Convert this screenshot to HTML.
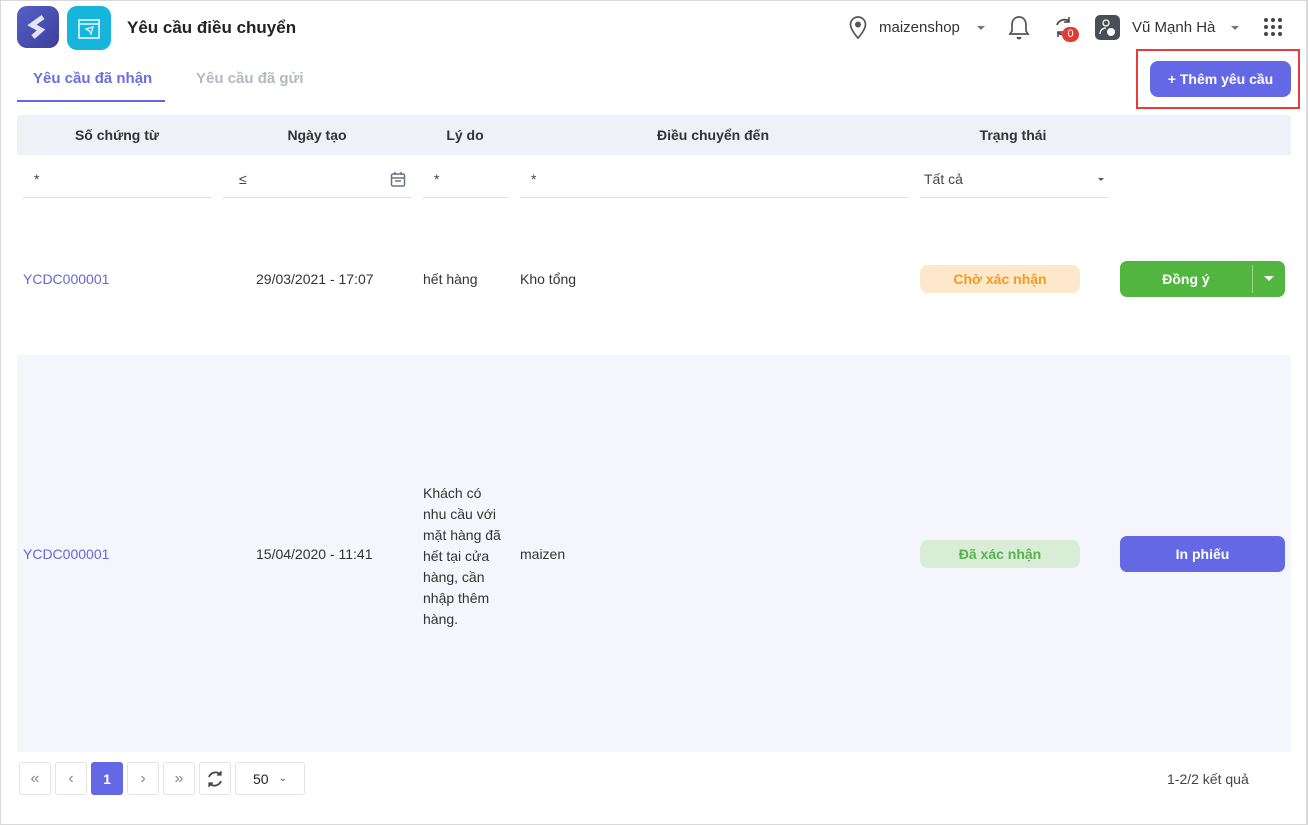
<!DOCTYPE html>
<html><head><meta charset="utf-8"><style>
*{box-sizing:border-box;margin:0;padding:0}
body{width:1308px;height:825px;overflow:hidden;background:#fff;font-family:"Liberation Sans","Noto Sans CJK SC",sans-serif;font-size:14px;color:#333;position:relative}
.frame{position:absolute;inset:0;border:1px solid #d9d9d9;border-right:2px solid #d9d9d9}
.abs{position:absolute}
.hd{font-weight:bold;font-size:14px;color:#333;text-align:center;top:127px}
.inp{position:absolute;top:197px;height:1px;background:#ddd}
.ph{position:absolute;top:171px;font-size:14px;color:#444}
.pg{position:absolute;top:762px;height:33px;border:1px solid #e3e3e3;border-radius:3px;display:flex;align-items:center;justify-content:center;color:#888;font-size:16px;background:#fff}
</style></head><body>
<div class="frame"></div>
<div class="abs" style="left:17px;top:6px;width:42px;height:42px;border-radius:10px;background:linear-gradient(135deg,#5560c8,#3c3f9a)">
<svg width="42" height="42"><path d="M26 11 L15 19 L24 24 L16 31" stroke="#fff" stroke-width="5" fill="none" opacity=".85"/></svg></div>
<div class="abs" style="left:67px;top:6px;width:44px;height:44px;border-radius:10px;background:#16b6dc">
<svg width="44" height="44"><rect x="12" y="14" width="20" height="18" fill="none" stroke="#e6f7fc" stroke-width="1.6"/><path d="M12 18h20" stroke="#e6f7fc" stroke-width="1.6"/><path d="M19 23l7-2-2 7-1.5-3z" fill="none" stroke="#e6f7fc" stroke-width="1.3"/></svg></div>
<div class="abs" style="left:127px;top:18px;font-size:17px;font-weight:bold;color:#222">Yêu cầu điều chuyển</div>
<svg class="abs" style="left:848px;top:15px" width="20" height="26"><path d="M10 2a7.5 7.5 0 0 0-7.5 7.5C2.5 15 10 23 10 23s7.5-8 7.5-13.5A7.5 7.5 0 0 0 10 2z" fill="none" stroke="#555" stroke-width="1.7"/><circle cx="10" cy="9.5" r="3" fill="#555"/></svg>
<div class="abs" style="left:879px;top:19px;font-size:15px;color:#333">maizenshop</div>
<div class="abs" style="left:977px;top:26px;border:4px solid transparent;border-top-color:#777"></div>
<svg class="abs" style="left:1007px;top:14px" width="24" height="28"><path d="M12 3c-5 0-7 4-7 8v6l-2 3h18l-2-3v-6c0-4-2-8-7-8z" fill="none" stroke="#555" stroke-width="1.7"/><path d="M9.5 23a2.5 2.5 0 0 0 5 0" fill="#555"/></svg>
<svg class="abs" style="left:1053px;top:16px" width="22" height="22"><path d="M16 5a8 8 0 0 0-12 4M5 17a8 8 0 0 0 12-4" fill="none" stroke="#444" stroke-width="1.8"/><path d="M16 1v5h-5M5 21v-5h5" fill="none" stroke="#444" stroke-width="1.5"/></svg>
<div class="abs" style="left:1062px;top:27px;width:17px;height:15px;border-radius:8px;background:#e53935;color:#fff;font-size:11px;text-align:center;line-height:15px">0</div>
<div class="abs" style="left:1095px;top:15px;width:25px;height:25px;border-radius:5px;background:#4a4f57">
<svg width="25" height="25"><circle cx="11" cy="8" r="3" fill="none" stroke="#fff" stroke-width="1.3"/><path d="M5 19c0-4 3-6 6-6" fill="none" stroke="#fff" stroke-width="1.3"/><circle cx="16" cy="17" r="4" fill="#fff"/></svg></div>
<div class="abs" style="left:1132px;top:19px;font-size:15px;color:#333">Vũ Mạnh Hà</div>
<div class="abs" style="left:1231px;top:26px;border:4px solid transparent;border-top-color:#777"></div>
<svg class="abs" style="left:1263px;top:17px" width="20" height="20"><g fill="#444"><circle cx="3" cy="3" r="2"/><circle cx="10" cy="3" r="2"/><circle cx="17" cy="3" r="2"/><circle cx="3" cy="10" r="2"/><circle cx="10" cy="10" r="2"/><circle cx="17" cy="10" r="2"/><circle cx="3" cy="17" r="2"/><circle cx="10" cy="17" r="2"/><circle cx="17" cy="17" r="2"/></g></svg>
<div class="abs" style="left:33px;top:70px;font-size:15px;font-weight:bold;color:#6a6fdc">Yêu cầu đã nhận</div>
<div class="abs" style="left:17px;top:100px;width:148px;height:2px;background:#6366e0"></div>
<div class="abs" style="left:196px;top:70px;font-size:15px;font-weight:bold;color:#b3b8c2">Yêu cầu đã gửi</div>
<div class="abs" style="left:1136px;top:49px;width:164px;height:60px;border:2px solid #ea3b3b"></div>
<div class="abs" style="left:1150px;top:61px;width:141px;height:36px;border-radius:8px;background:#6468e4;color:#fff;font-weight:bold;font-size:14px;text-align:center;line-height:36px">+ Thêm yêu cầu</div>
<div class="abs" style="left:17px;top:115px;width:1274px;height:40px;background:#f0f1f7;border-radius:4px 4px 0 0"></div>
<div class="abs hd" style="left:17px;width:200px">Số chứng từ</div>
<div class="abs hd" style="left:217px;width:200px">Ngày tạo</div>
<div class="abs hd" style="left:417px;width:96px">Lý do</div>
<div class="abs hd" style="left:513px;width:400px">Điều chuyển đến</div>
<div class="abs hd" style="left:913px;width:200px">Trạng thái</div>
<div class="inp" style="left:23px;width:188px"></div><div class="ph" style="left:34px">*</div>
<div class="inp" style="left:223px;width:188px"></div><div class="ph" style="left:239px">≤</div>
<svg class="abs" style="left:390px;top:171px" width="16" height="17"><rect x="1.5" y="3" width="13" height="12" rx="1.5" fill="none" stroke="#6b7280" stroke-width="1.5"/><path d="M1.5 7h13M5 1v3M11 1v3M5 10h6" stroke="#6b7280" stroke-width="1.5"/></svg>
<div class="inp" style="left:423px;width:85px"></div><div class="ph" style="left:434px">*</div>
<div class="inp" style="left:520px;width:388px"></div><div class="ph" style="left:531px">*</div>
<div class="inp" style="left:920px;width:188px"></div><div class="ph" style="left:924px">Tất cả</div>
<div class="abs" style="left:1098px;top:178px;border:3.5px solid transparent;border-top-color:#555"></div>
<div class="abs" style="left:23px;top:271px;color:#6468d8">YCDC000001</div>
<div class="abs" style="left:256px;top:271px">29/03/2021 - 17:07</div>
<div class="abs" style="left:423px;top:271px">hết hàng</div>
<div class="abs" style="left:520px;top:271px">Kho tổng</div>
<div class="abs" style="left:920px;top:265px;width:160px;height:28px;border-radius:8px;background:#fde8cc;color:#f39a1e;font-weight:bold;text-align:center;line-height:28px">Chờ xác nhận</div>
<div class="abs" style="left:1120px;top:261px;width:165px;height:36px;border-radius:7px;background:#52b53f;color:#fff;font-weight:bold;line-height:36px">
<span style="position:absolute;left:0;width:132px;text-align:center">Đồng ý</span>
<span style="position:absolute;left:132px;top:4px;width:1px;height:28px;background:#9ed492"></span>
<span style="position:absolute;left:144px;top:15px;border:5px solid transparent;border-top-color:#fff"></span></div>
<div class="abs" style="left:17px;top:355px;width:1274px;height:397px;background:#f5f6fb"></div>
<div class="abs" style="left:23px;top:546px;color:#6468d8">YCDC000001</div>
<div class="abs" style="left:256px;top:546px">15/04/2020 - 11:41</div>
<div class="abs" style="left:423px;top:483px;width:82px;line-height:21px">Khách có nhu cầu với mặt hàng đã hết tại cửa hàng, cần nhập thêm hàng.</div>
<div class="abs" style="left:520px;top:546px">maizen</div>
<div class="abs" style="left:920px;top:540px;width:160px;height:28px;border-radius:8px;background:#d8ecd6;color:#58b150;font-weight:bold;text-align:center;line-height:28px">Đã xác nhận</div>
<div class="abs" style="left:1120px;top:536px;width:165px;height:36px;border-radius:7px;background:#6468e4;color:#fff;font-weight:bold;text-align:center;line-height:36px">In phiếu</div>
<div class="pg" style="left:19px;width:32px">«</div>
<div class="pg" style="left:55px;width:32px">‹</div>
<div class="pg" style="left:91px;width:32px;background:#6468e4;border-color:#6468e4;color:#fff;font-weight:bold;font-size:14px">1</div>
<div class="pg" style="left:127px;width:32px">›</div>
<div class="pg" style="left:163px;width:32px">»</div>
<div class="pg" style="left:199px;width:32px"><svg width="20" height="20"><path d="M15 5a7 7 0 0 0-11 3M5 15a7 7 0 0 0 11-3" fill="none" stroke="#444" stroke-width="1.8"/><path d="M16 2v4h-4M4 18v-4h4" fill="#444" stroke="#444" stroke-width="1.2"/></svg></div>
<div class="pg" style="left:235px;width:70px;color:#222;font-size:14px">50 <span style="font-size:10px;margin-left:10px;color:#555">⌄</span></div>
<div class="abs" style="left:1167px;top:771px;color:#444">1-2/2 kết quả</div>
</body></html>
